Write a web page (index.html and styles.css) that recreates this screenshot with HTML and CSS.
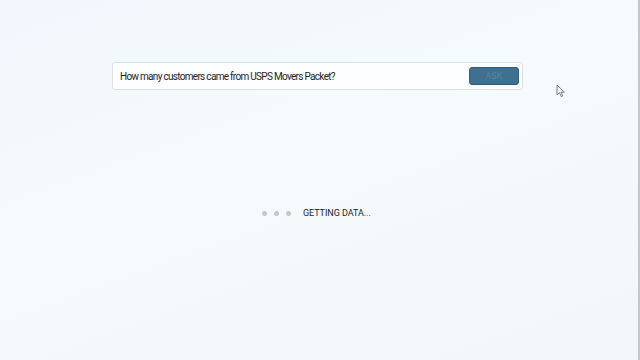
FILE: index.html
```html
<!DOCTYPE html>
<html>
	<head>
		<meta charset="utf-8" />
		<title>Ask</title>
		<link rel="stylesheet" href="styles.css">
	</head>
	<body>
		<div class="page">
			<div class="ask-box">
				<span class="question">How many customers came from USPS Movers Packet?</span>
				<button class="ask-btn">ASK</button>
			</div>

			<div class="loading">
				<div class="dots">
					<span class="dot"></span>
					<span class="dot"></span>
					<span class="dot"></span>
				</div>
				<span class="loading-text">GETTING DATA...</span>
			</div>
		</div>

		<!-- mouse pointer -->
		<svg class="cursor" width="10" height="14" viewBox="0 0 10 14">
			<path d="M1 1 L1 11 L3.5 8.8 L5.3 12.6 L6.8 11.9 L5 8.2 L8.4 8.2 Z" fill="#fff" stroke="#6a6e74" stroke-width="0.9" stroke-linejoin="round"/>
		</svg>
	</body>
</html>
```

FILE: styles.css
```css
body {
	margin: 0;
	font-family: Roboto, "Liberation Sans", Arial, sans-serif;
	background: linear-gradient(160deg, #f1f7fc 0%, #f5fafd 45%, #f3f6fa 100%);
	height: 360px;
	overflow: hidden;
}
.page {
	height: 360px;
	border-right: 2px solid #c4c7cb;
	box-sizing: border-box;
	display: flex;
	flex-direction: column;
}
.ask-box {
	margin: 62px 0 0 112px;
	width: 411px;
	height: 28px;
	box-sizing: border-box;
	background: #fdfeff;
	border: 1px solid #dde1e6;
	border-radius: 3px;
	display: flex;
	align-items: center;
	justify-content: space-between;
	padding: 0 3px 0 7px;
}
.question {
	font-size: 10px;
	color: #1f2326;
	letter-spacing: -0.7px;
}
.ask-btn {
	width: 50px;
	height: 18px;
	background: #40708f;
	border: 1px solid #2f5d7b;
	border-radius: 3px;
	color: #4f86a6;
	font-family: inherit;
	font-size: 9px;
	padding: 0;
}
.loading {
	margin: 118px 0 0 262px;
	display: flex;
	align-items: center;
	gap: 12px;
}
.dots {
	display: flex;
	gap: 7px;
}
.dot {
	width: 5px;
	height: 5px;
	border-radius: 50%;
	background: #c5c8cd;
}
.loading-text {
	font-size: 9px;
	color: #1f2326;
	letter-spacing: -0.05px;
}
.cursor {
	position: absolute;
	left: 556px;
	top: 84px;
}
```
